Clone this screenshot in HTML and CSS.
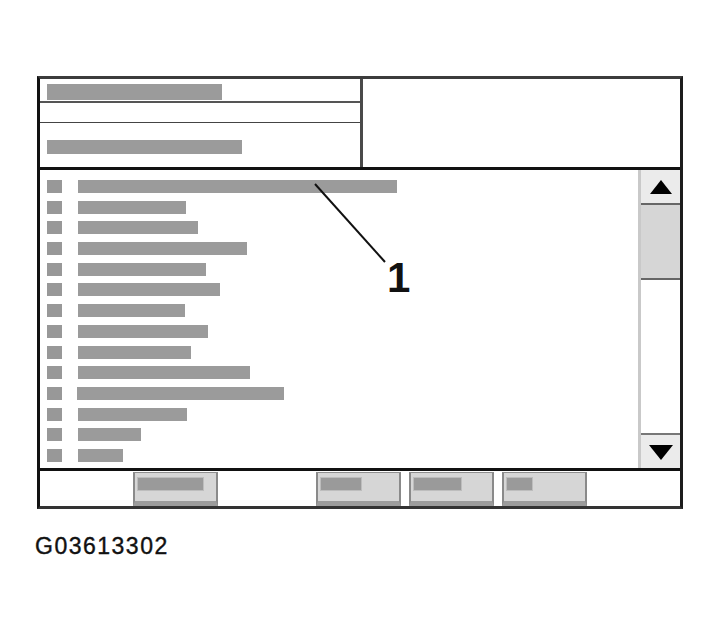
FILE: index.html
```html
<!DOCTYPE html>
<html lang="en">
<head>
<meta charset="utf-8">
<title>G03613302</title>
<link rel="stylesheet" href="styles.css">
</head>
<body>
<div class="page">
  <div class="frame">
    <div class="top">
      <div class="fields">
        <div class="field f1"><span class="bar bar-title"></span></div>
        <div class="field f2"></div>
        <div class="field f3"><span class="bar bar-sub"></span></div>
      </div>
      <div class="info"></div>
    </div>
    <div class="list">
      <ul class="rows">
        <li class="row"><span class="sq"></span><span class="bar" style="width:319px"></span></li>
        <li class="row"><span class="sq"></span><span class="bar" style="width:108px"></span></li>
        <li class="row"><span class="sq"></span><span class="bar" style="width:120px"></span></li>
        <li class="row"><span class="sq"></span><span class="bar" style="width:169px"></span></li>
        <li class="row"><span class="sq"></span><span class="bar" style="width:128px"></span></li>
        <li class="row"><span class="sq"></span><span class="bar" style="width:142px"></span></li>
        <li class="row"><span class="sq"></span><span class="bar" style="width:107px"></span></li>
        <li class="row"><span class="sq"></span><span class="bar" style="width:130px"></span></li>
        <li class="row"><span class="sq"></span><span class="bar" style="width:113px"></span></li>
        <li class="row"><span class="sq"></span><span class="bar" style="width:172px"></span></li>
        <li class="row"><span class="sq"></span><span class="bar bar-shift" style="width:207px"></span></li>
        <li class="row"><span class="sq"></span><span class="bar" style="width:109px"></span></li>
        <li class="row"><span class="sq"></span><span class="bar" style="width:63px"></span></li>
        <li class="row"><span class="sq"></span><span class="bar" style="width:45px"></span></li>
      </ul>
      <div class="scroll">
        <div class="sbtn up"><span class="tri-up"></span></div>
        <div class="thumb"></div>
        <div class="track"></div>
        <div class="sbtn down"><span class="tri-down"></span></div>
      </div>
    </div>
    <div class="buttons">
      <div class="btn"><span class="btn-bar" style="width:65px"></span></div>
      <div class="btn btn-far"><span class="btn-bar" style="width:40px"></span></div>
      <div class="btn btn-near"><span class="btn-bar" style="width:47px"></span></div>
      <div class="btn btn-near"><span class="btn-bar" style="width:25px"></span></div>
    </div>
  </div>
  <p class="caption">G03613302</p>
  <svg class="leader" width="721" height="631" viewBox="0 0 721 631" aria-hidden="true">
    <line x1="315" y1="184" x2="385" y2="262" stroke="#111" stroke-width="2"/>
  </svg>
  <span class="callout">1</span>
</div>
</body>
</html>
```
FILE: styles.css
```css
html, body {
  margin: 0;
  padding: 0;
  background: #fff;
}

.page {
  position: relative;
  width: 721px;
  height: 631px;
  overflow: hidden;
  font-family: "Liberation Sans", Arial, sans-serif;
  color: #111;
}

.frame {
  box-sizing: border-box;
  width: 646px;
  margin: 76px 0 0 37px;
  border-top: 3px solid #3c3c3c;
  border-left: 3px solid #111;
  border-right: 3px solid #1c1c1c;
  border-bottom: 3px solid #333;
}

/* ---------- top section ---------- */
.top {
  display: flex;
  height: 88px;
  border-bottom: 3px solid #111;
}

.fields {
  width: 320px;
  display: flex;
  flex-direction: column;
}

.field {
  box-sizing: border-box;
  padding-left: 7px;
}

.f1 {
  height: 24px;
  padding-top: 5px;
  border-bottom: 2px solid #555;
}

.f2 {
  height: 20px;
  border-bottom: 1px solid #444;
}

.f3 {
  height: 44px;
  padding-top: 17px;
}

.info {
  flex: 1;
  border-left: 3px solid #4a4a4a;
}

.bar {
  display: block;
  height: 13px;
  background: #9b9b9b;
}

.bar-title {
  width: 175px;
  height: 16px;
}

.bar-sub {
  width: 195px;
  height: 14px;
}

/* ---------- list ---------- */
.list {
  display: flex;
  height: 298px;
  border-bottom: 3px solid #111;
}

.rows {
  flex: 1;
  list-style: none;
  margin: 0;
  padding: 10px 0 0 7px;
  display: flex;
  flex-direction: column;
  gap: 7.7px;
}

.row {
  display: flex;
  align-items: center;
  height: 13px;
}

.sq {
  width: 15px;
  height: 13px;
  background: #989898;
  margin-right: 16px;
  flex: none;
}

.bar-shift {
  margin-left: -1px;
}

/* ---------- scrollbar ---------- */
.scroll {
  box-sizing: border-box;
  width: 42px;
  border-left: 3px solid #c9c9c9;
  display: flex;
  flex-direction: column;
}

.sbtn {
  height: 33px;
  background: #ebebeb;
  display: flex;
  justify-content: center;
  align-items: flex-start;
}

.up {
  border-bottom: 2px solid #666;
}

.down {
  border-top: 2px solid #777;
}

.tri-up {
  width: 0;
  height: 0;
  margin-top: 10px;
  border-left: 11px solid transparent;
  border-right: 11px solid transparent;
  border-bottom: 14px solid #000;
}

.tri-down {
  width: 0;
  height: 0;
  margin-top: 10px;
  border-left: 12px solid transparent;
  border-right: 12px solid transparent;
  border-top: 15px solid #000;
}

.thumb {
  height: 73px;
  background: #d6d6d6;
  border-bottom: 2px solid #666;
}

.track {
  flex: 1;
  background: #fff;
}

/* ---------- bottom buttons ---------- */
.buttons {
  display: flex;
  align-items: flex-start;
  height: 35px;
  box-sizing: border-box;
  padding: 1px 0 0 93px;
}

.btn {
  box-sizing: border-box;
  width: 85px;
  height: 34px;
  padding: 5px 0 0 3px;
  background: #d6d6d6;
  border-top: 1px solid #8e8e8e;
  border-left: 2px solid #8a8a8a;
  border-right: 2px solid #8a8a8a;
  border-bottom: 5px solid #9c9c9c;
}

.btn-far {
  margin-left: 98px;
}

.btn-near {
  margin-left: 8px;
}

.btn-bar {
  display: block;
  height: 12px;
  background: #9a9a9a;
  box-shadow: 0 0 0 1px #bdbdbd;
}

/* ---------- caption & callout ---------- */
.caption {
  margin: 24px 0 0 35px;
  font-size: 23px;
  line-height: 26px;
  letter-spacing: 1.5px;
  color: #111;
  -webkit-text-stroke: 0.4px #111;
}

.leader {
  position: absolute;
  left: 0;
  top: 0;
  pointer-events: none;
}

.callout {
  position: absolute;
  left: 387px;
  top: 257px;
  font-size: 42px;
  line-height: 42px;
  font-weight: bold;
  color: #111;
}
```
